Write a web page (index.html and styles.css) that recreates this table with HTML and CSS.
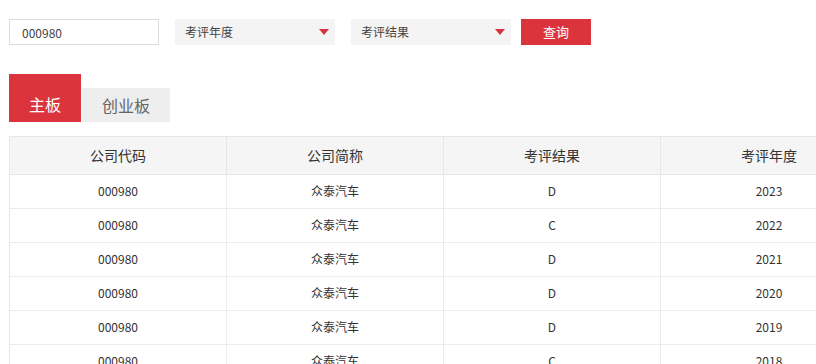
FILE: index.html
```html
<!DOCTYPE html>
<html lang="zh">
<head>
<meta charset="utf-8">
<link rel="stylesheet" href="styles.css">
</head>
<body>
<div class="page">
  <div class="filters">
    <input class="code-input" type="text" value="000980">
    <div class="select sel-year"><span>考评年度</span><i class="caret"></i></div>
    <div class="select sel-result"><span>考评结果</span><i class="caret"></i></div>
    <button class="btn-query">查询</button>
  </div>
  <div class="tabs">
    <div class="tab active">主板</div>
    <div class="tab">创业板</div>
  </div>
  <div class="table">
    <div class="row head">
      <div class="cell">公司代码</div><div class="cell">公司简称</div><div class="cell">考评结果</div><div class="cell">考评年度</div>
    </div>
    <div class="row"><div class="cell">000980</div><div class="cell">众泰汽车</div><div class="cell">D</div><div class="cell">2023</div></div>
    <div class="row"><div class="cell">000980</div><div class="cell">众泰汽车</div><div class="cell">C</div><div class="cell">2022</div></div>
    <div class="row"><div class="cell">000980</div><div class="cell">众泰汽车</div><div class="cell">D</div><div class="cell">2021</div></div>
    <div class="row"><div class="cell">000980</div><div class="cell">众泰汽车</div><div class="cell">D</div><div class="cell">2020</div></div>
    <div class="row"><div class="cell">000980</div><div class="cell">众泰汽车</div><div class="cell">D</div><div class="cell">2019</div></div>
    <div class="row"><div class="cell">000980</div><div class="cell">众泰汽车</div><div class="cell">C</div><div class="cell">2018</div></div>
  </div>
</div>
</body>
</html>
```

FILE: styles.css
```css
html, body {
  margin: 0;
  padding: 0;
  overflow: hidden;
  background: #fff;
}
body {
  font-family: "Noto Sans CJK SC", "Noto Sans", sans-serif;
  color: #333;
}
.page {
  padding: 19px 0 0 9px;
  width: 900px;
}
.filters {
  display: flex;
  align-items: center;
  height: 26px;
}
.code-input {
  box-sizing: border-box;
  width: 150px;
  height: 26px;
  border: 1px solid #dcdcdc;
  padding: 0 0 0 12px;
  margin: 0;
  font: 12px "Noto Sans CJK SC", sans-serif;
  color: #444;
  outline: none;
}
.select {
  box-sizing: border-box;
  width: 160px;
  height: 26px;
  background: #f4f4f4;
  display: flex;
  align-items: center;
  justify-content: space-between;
  padding: 0 6px 1px 10px;
  font-size: 12px;
  color: #444;
}
.sel-year { margin-left: 16px; }
.sel-result { margin-left: 16px; }
.caret {
  width: 0;
  height: 0;
  border-left: 5px solid transparent;
  border-right: 5px solid transparent;
  border-top: 6px solid #d9323c;
  margin-top: 1px;
}
.btn-query {
  margin-left: 10px;
  width: 70px;
  height: 26px;
  border: none;
  background: #dc343d;
  color: #fff;
  font: 13px "Noto Sans CJK SC", sans-serif;
  padding: 0 0 2px 0;
}
.tabs {
  display: flex;
  align-items: flex-end;
  margin-top: 29px;
  height: 48px;
}
.tab {
  height: 34px;
  width: 88px;
  margin-left: 1px;
  background: #eeeeee;
  color: #666;
  font-size: 16px;
  display: flex;
  align-items: center;
  justify-content: center;
}
.tab.active {
  margin-left: 0;
  width: 72px;
  height: 48px;
  background: #dc343d;
  color: #fff;
  align-items: flex-end;
  padding-bottom: 6px;
  box-sizing: border-box;
}
.table {
  margin-top: 14px;
  width: 869px;
  border-left: 1px solid #e6e6e6;
  border-top: 1px solid #e6e6e6;
}
.row {
  display: grid;
  grid-template-columns: 217px 217px 217px 217px;
  height: 34px;
  border-bottom: 1px solid #ececec;
  box-sizing: border-box;
}
.row.head {
  height: 38px;
  background: #f5f5f5;
  border-bottom: 1px solid #e6e6e6;
}
.cell {
  display: flex;
  align-items: center;
  justify-content: center;
  font-size: 12px;
  color: #333;
  border-right: 1px solid #ececec;
  padding-bottom: 2px;
}
.head .cell {
  font-size: 14px;
  border-right-color: #e6e6e6;
}
```
